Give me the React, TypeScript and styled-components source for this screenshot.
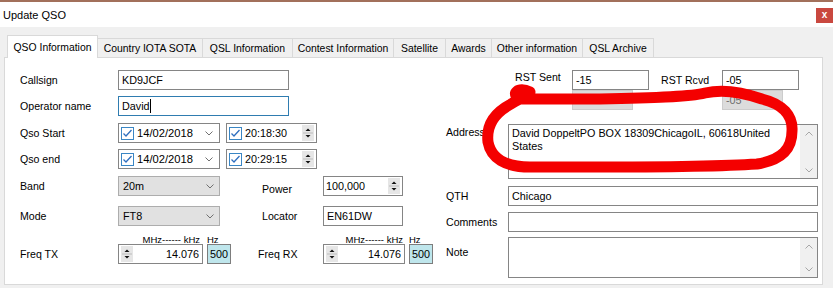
import React from "react";
import styled, { createGlobalStyle } from "styled-components";

const Global = createGlobalStyle`
  html, body { margin: 0; padding: 0; background: #ffffff; }
  body { font-family: "Liberation Sans", Arial, sans-serif; font-size: 10.8px; color: #000; }
  * { box-sizing: border-box; }
`;

const Window = styled.div`
  position: relative;
  width: 833px;
  height: 288px;
  background: #f0f0f0;
  overflow: hidden;
  display: flex;
  flex-direction: column;
`;

const TopEdge = styled.div`
  height: 2px;
  background: #a2705b;
  flex-shrink: 0;
`;

const TitleBar = styled.div`
  height: 25px;
  background: #ffffff;
  display: flex;
  justify-content: space-between;
  align-items: flex-start;
  padding-left: 3px;
  flex-shrink: 0;
`;

const Title = styled.div`
  font-size: 11px;
  line-height: 12px;
  margin-top: 7px;
`;

const CloseButton = styled.div`
  margin-top: 6px;
  width: 17px;
  height: 15px;
  background: #c9483f;
  color: #fff;
  font-size: 10px;
  font-weight: bold;
  line-height: 14px;
  text-align: center;
`;

const Body = styled.div`
  flex: 1;
  padding-left: 4px;
  display: flex;
  flex-direction: column;
`;

const TabStrip = styled.div`
  position: relative;
  z-index: 2;
  margin-top: 8px;
  height: 22px;
  padding-left: 3px;
  display: flex;
  align-items: flex-end;
`;

const Tab = styled.div<{ $w: number; $active?: boolean }>`
  width: ${(p) => p.$w}px;
  height: ${(p) => (p.$active ? 23 : 19)}px;
  margin-bottom: ${(p) => (p.$active ? -1 : 0)}px;
  margin-right: -1px;
  border: 1px solid #d9d9d9;
  border-bottom: none;
  background: ${(p) => (p.$active ? "#ffffff" : "#f0f0f0")};
  display: flex;
  align-items: center;
  justify-content: center;
  font-size: 10.4px;
  white-space: nowrap;
  flex-shrink: 0;
`;

const Panel = styled.div`
  position: relative;
  z-index: 1;
  width: 819px;
  height: 228px;
  background: #ffffff;
  border: 1px solid #d9d9d9;
  padding: 12px 4px 0 15px;
  display: flex;
  gap: 13px;
`;

const LeftCol = styled.div`
  width: 413px;
  display: flex;
  flex-direction: column;
`;

const RightCol = styled.div`
  width: 372px;
  display: flex;
  flex-direction: column;
`;

const Row = styled.div<{ $mt?: number; $pl?: number; $end?: boolean }>`
  display: flex;
  align-items: ${(p) => (p.$end ? "flex-end" : "flex-start")};
  margin-top: ${(p) => p.$mt ?? 0}px;
  padding-left: ${(p) => p.$pl ?? 0}px;
`;

const Label = styled.div<{ $w?: number; $ml?: number; $dy?: number; $h?: number }>`
  width: ${(p) => p.$w ?? 98}px;
  margin-left: ${(p) => p.$ml ?? 0}px;
  height: ${(p) => p.$h ?? 20}px;
  line-height: ${(p) => p.$h ?? 20}px;
  padding-top: ${(p) => p.$dy ?? 0}px;
  font-size: 10.6px;
  white-space: nowrap;
  flex-shrink: 0;
`;

const Field = styled.div<{ $w: number; $h?: number; $focus?: boolean }>`
  width: ${(p) => p.$w}px;
  height: ${(p) => p.$h ?? 20}px;
  border: 1px solid ${(p) => (p.$focus ? "#2f7cb0" : "#858585")};
  background: #ffffff;
  display: flex;
  align-items: center;
  padding: 0 3px;
  white-space: nowrap;
  flex-shrink: 0;
`;

const Caret = styled.span`
  display: inline-block;
  width: 1px;
  height: 14px;
  background: #000;
`;

const Picker = styled.div<{ $w: number; $ml?: number }>`
  width: ${(p) => p.$w}px;
  margin-left: ${(p) => p.$ml ?? 0}px;
  height: 20px;
  border: 1px solid #858585;
  background: #ffffff;
  display: flex;
  align-items: center;
  padding: 0 2px 0 2px;
  flex-shrink: 0;
`;

const PickerText = styled.span<{ $size?: number }>`
  margin-left: 3px;
  font-size: ${(p) => p.$size ?? 10.8}px;
  white-space: nowrap;
`;

const Combo = styled.div<{ $w: number }>`
  width: ${(p) => p.$w}px;
  height: 20px;
  border: 1px solid #adadad;
  background: #e1e1e1;
  display: flex;
  align-items: center;
  padding: 0 3px 0 4px;
  flex-shrink: 0;
`;

const Push = styled.span<{ $mr?: number }>`
  margin-left: auto;
  margin-right: ${(p) => p.$mr ?? 0}px;
  display: flex;
  align-items: center;
`;

const NumBox = styled.div<{ $w: number }>`
  width: ${(p) => p.$w}px;
  height: 20px;
  border: 1px solid #858585;
  background: #ffffff;
  display: flex;
  align-items: center;
  padding: 0 2px;
  flex-shrink: 0;
`;

const NumText = styled.span<{ $right?: boolean }>`
  flex: 1;
  text-align: ${(p) => (p.$right ? "right" : "left")};
  padding-right: ${(p) => (p.$right ? 1 : 0)}px;
  white-space: nowrap;
`;

const HzBox = styled.div`
  width: 24px;
  height: 20px;
  margin-left: 4px;
  border: 1px solid #7d7d7d;
  background: #bfe6ec;
  display: flex;
  align-items: center;
  justify-content: center;
  font-size: 10.8px;
  flex-shrink: 0;
`;

const FreqGroup = styled.div`
  display: flex;
  flex-direction: column;
`;

const FreqHeader = styled.div`
  display: flex;
  height: 9px;
  font-size: 9.5px;
  line-height: 9px;
  white-space: nowrap;
`;

const HeadMain = styled.span<{ $w: number; $pr: number }>`
  width: ${(p) => p.$w}px;
  text-align: right;
  padding-right: ${(p) => p.$pr}px;
`;

const HeadHz = styled.span`
  margin-left: 4px;
`;

const FreqInputs = styled.div`
  display: flex;
`;

const Disabled = styled.div<{ $ml?: number }>`
  width: 61px;
  height: 20px;
  margin-left: ${(p) => p.$ml ?? 0}px;
  background: #dcdcdc;
  border: 1px solid #cccccc;
  color: #6d6d6d;
  display: flex;
  align-items: center;
  padding-left: 3px;
  flex-shrink: 0;
`;

const TextArea = styled.div<{ $h: number }>`
  width: 310px;
  height: ${(p) => p.$h}px;
  border: 1px solid #858585;
  background: #ffffff;
  display: flex;
  flex-shrink: 0;
`;

const TextBody = styled.div`
  flex: 1;
  padding: 2px 3px;
  line-height: 13px;
`;

const ScrollBar = styled.div`
  width: 17px;
  background: #f0f0f0;
  display: flex;
  flex-direction: column;
  justify-content: space-between;
  align-items: center;
  padding: 6px 0 5px;
`;

const Scribble = styled.svg`
  position: absolute;
  left: 0;
  top: 0;
  pointer-events: none;
  z-index: 5;
`;

const CheckBox = () => (
  <svg width="13" height="13" viewBox="0 0 13 13" style={{ flexShrink: 0 }}>
    <rect x="0.5" y="0.5" width="12" height="12" fill="#fff" stroke="#3a86c4" />
    <polyline points="2.5,6.5 5,9 10.5,3" fill="none" stroke="#2f6fbf" strokeWidth="1.3" />
  </svg>
);

const Chevron = () => (
  <svg width="8" height="5" viewBox="0 0 8 5">
    <polyline points="0.5,0.5 4,4 7.5,0.5" fill="none" stroke="#707070" strokeWidth="1" />
  </svg>
);

const ScrollArrow = ({ up }: { up?: boolean }) => (
  <svg width="8" height="5" viewBox="0 0 8 5">
    <polyline
      points={up ? "0.5,4.5 4,1 7.5,4.5" : "0.5,0.5 4,4 7.5,0.5"}
      fill="none"
      stroke="#a6a6a6"
      strokeWidth="1"
    />
  </svg>
);

const Spinner = () => (
  <svg width="12" height="16" viewBox="0 0 12 16" style={{ flexShrink: 0 }}>
    <rect x="0" y="0" width="12" height="16" fill="#e6e6e6" />
    <line x1="1" y1="8" x2="11" y2="8" stroke="#bcbcbc" />
    <polygon points="3.5,6 6,3.5 8.5,6" fill="#111" />
    <polygon points="3.5,10 6,12.5 8.5,10" fill="#111" />
  </svg>
);

const tabs = [
  { label: "QSO Information", w: 91, active: true },
  { label: "Country IOTA SOTA", w: 106 },
  { label: "QSL Information", w: 91 },
  { label: "Contest Information", w: 102 },
  { label: "Satellite", w: 53 },
  { label: "Awards", w: 47 },
  { label: "Other information", w: 92 },
  { label: "QSL Archive", w: 72 },
];

export default function App() {
  return (
    <>
      <Global />
      <Window>
        <TopEdge />
        <TitleBar>
          <Title>Update QSO</Title>
          <CloseButton>x</CloseButton>
        </TitleBar>
        <Body>
          <TabStrip>
            {tabs.map((t) => (
              <Tab key={t.label} $w={t.w} $active={t.active}>
                {t.label}
              </Tab>
            ))}
          </TabStrip>
          <Panel>
            <LeftCol>
              <Row>
                <Label>Callsign</Label>
                <Field $w={171}>KD9JCF</Field>
              </Row>
              <Row $mt={6}>
                <Label>Operator name</Label>
                <Field $w={171} $focus>
                  David
                  <Caret />
                </Field>
              </Row>
              <Row $mt={7}>
                <Label>Qso Start</Label>
                <Picker $w={102}>
                  <CheckBox />
                  <PickerText $size={11.2}>14/02/2018</PickerText>
                  <Push $mr={4}>
                    <Chevron />
                  </Push>
                </Picker>
                <Picker $w={91} $ml={6}>
                  <CheckBox />
                  <PickerText>20:18:30</PickerText>
                  <Push>
                    <Spinner />
                  </Push>
                </Picker>
              </Row>
              <Row $mt={6}>
                <Label>Qso end</Label>
                <Picker $w={102}>
                  <CheckBox />
                  <PickerText $size={11.2}>14/02/2018</PickerText>
                  <Push $mr={4}>
                    <Chevron />
                  </Push>
                </Picker>
                <Picker $w={91} $ml={6}>
                  <CheckBox />
                  <PickerText>20:29:15</PickerText>
                  <Push>
                    <Spinner />
                  </Push>
                </Picker>
              </Row>
              <Row $mt={7}>
                <Label $dy={-1}>Band</Label>
                <Combo $w={102}>
                  20m
                  <Push $mr={2}>
                    <Chevron />
                  </Push>
                </Combo>
                <Label $w={61} $ml={42} $dy={3}>
                  Power
                </Label>
                <NumBox $w={80}>
                  <NumText>100,000</NumText>
                  <Spinner />
                </NumBox>
              </Row>
              <Row $mt={10}>
                <Label>Mode</Label>
                <Combo $w={102}>
                  FT8
                  <Push $mr={2}>
                    <Chevron />
                  </Push>
                </Combo>
                <Label $w={61} $ml={42}>
                  Locator
                </Label>
                <Field $w={80}>EN61DW</Field>
              </Row>
              <Row $mt={9} $end>
                <Label>Freq TX</Label>
                <FreqGroup>
                  <FreqHeader>
                    <HeadMain $w={85} $pr={3}>
                      MHz------ kHz
                    </HeadMain>
                    <HeadHz>Hz</HeadHz>
                  </FreqHeader>
                  <FreqInputs>
                    <NumBox $w={85}>
                      <Spinner />
                      <NumText $right>14.076</NumText>
                    </NumBox>
                    <HzBox>500</HzBox>
                  </FreqInputs>
                </FreqGroup>
                <Label $w={65} $ml={27}>
                  Freq RX
                </Label>
                <FreqGroup>
                  <FreqHeader>
                    <HeadMain $w={82} $pr={2}>
                      MHz------ kHz
                    </HeadMain>
                    <HeadHz>Hz</HeadHz>
                  </FreqHeader>
                  <FreqInputs>
                    <NumBox $w={82}>
                      <Spinner />
                      <NumText $right>14.076</NumText>
                    </NumBox>
                    <HzBox>500</HzBox>
                  </FreqInputs>
                </FreqGroup>
              </Row>
            </LeftCol>
            <RightCol>
              <Row $pl={69}>
                <Label $w={57} $h={14}>
                  RST Sent
                </Label>
                <Field $w={77}>-15</Field>
                <Label $w={61} $ml={12}>
                  RST Rcvd
                </Label>
                <Field $w={77}>-05</Field>
              </Row>
              <Row $pl={126}>
                <Disabled>-15</Disabled>
                <Disabled $ml={89}>-05</Disabled>
              </Row>
              <Row $mt={14}>
                <Label $w={62} $h={14} $dy={1}>
                  Address
                </Label>
                <TextArea $h={55}>
                  <TextBody>
                    David DoppeltPO BOX 18309ChicagoIL, 60618United
                    <br />
                    States
                  </TextBody>
                  <ScrollBar>
                    <ScrollArrow up />
                    <ScrollArrow />
                  </ScrollBar>
                </TextArea>
              </Row>
              <Row $mt={7}>
                <Label $w={62}>QTH</Label>
                <Field $w={310}>Chicago</Field>
              </Row>
              <Row $mt={6}>
                <Label $w={62}>Comments</Label>
                <Field $w={310} />
              </Row>
              <Row $mt={5}>
                <Label $w={62} $h={22} $dy={4}>
                  Note
                </Label>
                <TextArea $h={41}>
                  <TextBody />
                  <ScrollBar>
                    <ScrollArrow up />
                    <ScrollArrow />
                  </ScrollBar>
                </TextArea>
              </Row>
            </RightCol>
          </Panel>
        </Body>
        <Scribble width="833" height="288" viewBox="0 0 833 288">
          <path
            d="M 530 92 C 518 86 510 94 520 99 L 600 99 C 650 98 690 97 705 93 C 722 89 742 92 762 99 C 783 104 793 116 792 131 C 792 149 782 160 757 164 C 700 168 600 167 530 167 C 505 167 491 158 488 142 C 486 125 494 113 511 104 C 517 100 522 97 529 96"
            fill="none"
            stroke="#f40000"
            strokeWidth="11"
            strokeLinejoin="round"
            strokeLinecap="round"
          />
        </Scribble>
      </Window>
    </>
  );
}
